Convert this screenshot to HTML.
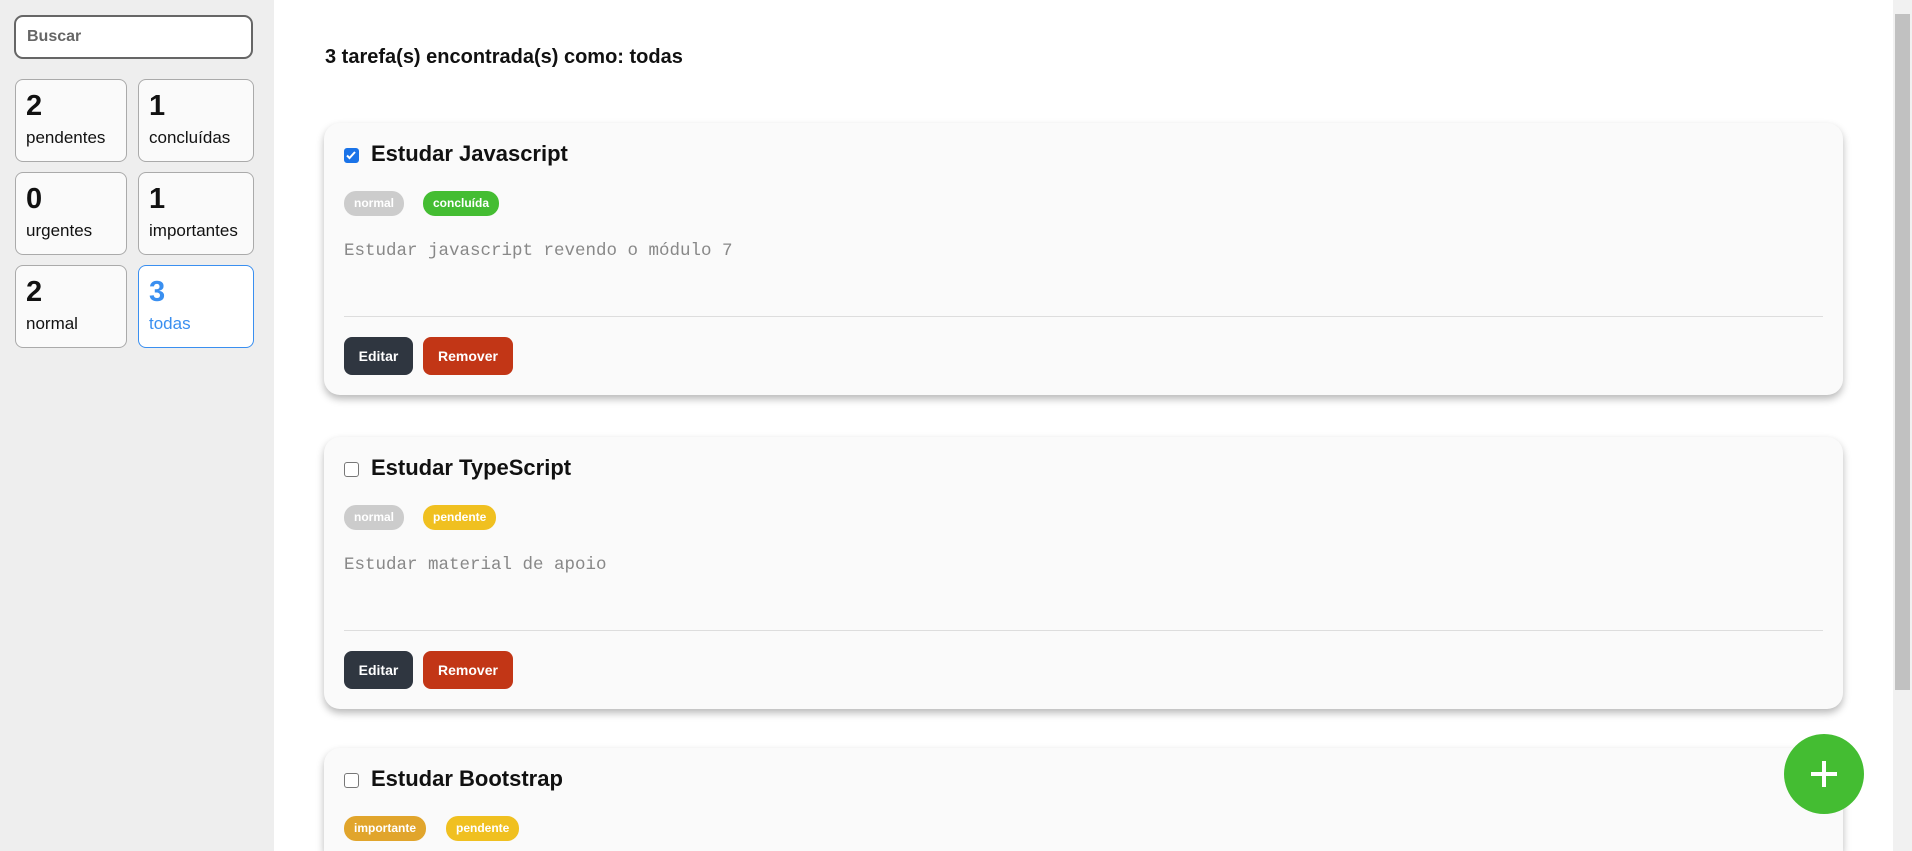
<!DOCTYPE html>
<html><head><meta charset="utf-8"><style>
*{box-sizing:border-box;margin:0;padding:0}
html,body{width:1912px;height:851px;overflow:hidden;background:#fff;font-family:"Liberation Sans",Arial,sans-serif;position:relative}
.side{position:absolute;left:0;top:0;width:274px;height:851px;background:#eee}
.search{position:absolute;left:14px;top:15px;width:239px;height:44px;border:2px solid #666;border-radius:9px;background:#fff;font-weight:bold;font-size:16px;color:#666;padding:11px 0 0 11px}
.stat{position:absolute;width:112px;height:83px;border:1px solid #aaa;border-radius:8px;background:#fafafa;padding:10px 0 0 10px;color:#111}
.stat b{display:block;font-size:29px;line-height:32px}
.stat span{display:block;font-size:17px;margin-top:6px}
.stat.act{border-color:#3a8ff0;background:#fff;color:#3a8ff0}
h2{position:absolute;left:325px;top:46px;font-size:20px;font-weight:bold;color:#111}
.card{position:absolute;left:324px;width:1519px;height:272px;background:#fafafa;border-radius:16px;box-shadow:0 4px 8px rgba(0,0,0,.28)}
.cb{position:absolute;left:20px;top:25px;width:15px;height:15px;border:1.5px solid #777;border-radius:3px;background:#fff}
.cb.on{background:#1a73e8;border-color:#1a73e8}
.t{position:absolute;left:47px;top:18px;font-size:22px;font-weight:bold;color:#111}
.bd{position:absolute;top:68px;height:25px;border-radius:12px;color:#fff;font-size:12px;font-weight:bold;line-height:25px;padding:0 10px}
.desc{position:absolute;left:20px;top:118px;font-family:"Liberation Mono",monospace;font-size:17.5px;color:#888}
.hr{position:absolute;left:20px;right:20px;top:193px;border-top:1px solid #ddd}
.btn{position:absolute;top:214px;height:38px;border-radius:8px;color:#fff;font-weight:bold;font-size:14px;line-height:38px;text-align:center}
.ed{left:20px;width:69px;background:#2f3640}
.rm{left:99px;width:90px;background:#c23616}
.fab{position:absolute;left:1784px;top:734px;width:80px;height:80px;border-radius:50%;background:#44bd32}
.fab:before{content:"";position:absolute;left:27px;top:38px;width:26px;height:4px;background:#fff}
.fab:after{content:"";position:absolute;left:38px;top:27px;width:4px;height:26px;background:#fff}
.sb{position:absolute;left:1893px;top:0;width:19px;height:851px;background:#f1f1f1}
.sb div{position:absolute;left:2px;top:14px;width:15px;height:676px;background:#c1c1c1}
</style></head><body>
<div class="side">
<div class="search">Buscar</div>
<div class="stat" style="left:15px;top:79px"><b>2</b><span>pendentes</span></div>
<div class="stat" style="left:138px;top:79px;width:116px"><b>1</b><span>concluídas</span></div>
<div class="stat" style="left:15px;top:172px"><b>0</b><span>urgentes</span></div>
<div class="stat" style="left:138px;top:172px;width:116px"><b>1</b><span>importantes</span></div>
<div class="stat" style="left:15px;top:265px"><b>2</b><span>normal</span></div>
<div class="stat act" style="left:138px;top:265px;width:116px"><b>3</b><span>todas</span></div>
</div>
<h2>3 tarefa(s) encontrada(s) como: todas</h2>

<div class="card" style="top:123px">
<div class="cb on"><svg width="12" height="12" viewBox="0 0 12 12" style="position:absolute;left:0;top:0"><path d="M2 6.5l2.5 2.5 5.5-6" stroke="#fff" stroke-width="2" fill="none"/></svg></div>
<div class="t">Estudar Javascript</div>
<div class="bd" style="left:20px;background:#ccc">normal</div>
<div class="bd" style="left:99px;background:#44bd32">concluída</div>
<div class="desc">Estudar javascript revendo o módulo 7</div>
<div class="hr"></div>
<div class="btn ed">Editar</div><div class="btn rm">Remover</div>
</div>

<div class="card" style="top:437px">
<div class="cb"></div>
<div class="t">Estudar TypeScript</div>
<div class="bd" style="left:20px;background:#ccc">normal</div>
<div class="bd" style="left:99px;background:#f0c020">pendente</div>
<div class="desc">Estudar material de apoio</div>
<div class="hr"></div>
<div class="btn ed">Editar</div><div class="btn rm">Remover</div>
</div>

<div class="card" style="top:748px;height:103px;border-radius:16px 16px 0 0">
<div class="cb"></div>
<div class="t">Estudar Bootstrap</div>
<div class="bd" style="left:20px;background:#e1a52c">importante</div>
<div class="bd" style="left:122px;background:#f0c020">pendente</div>
</div>

<div class="fab"></div>
<div class="sb"><div></div></div>
</body></html>
